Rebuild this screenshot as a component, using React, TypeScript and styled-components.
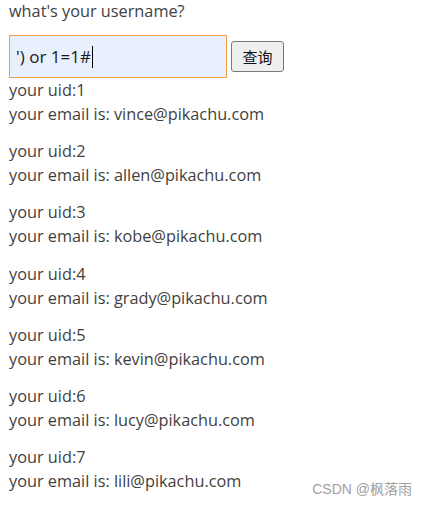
import React from "react";
import styled, { createGlobalStyle } from "styled-components";

const Global = createGlobalStyle`
  html, body { margin: 0; padding: 0; background: #ffffff; }
  body { font-family: "Open Sans", "Noto Sans CJK SC", sans-serif; }
`;

const Page = styled.div`
  position: relative;
  width: 428px;
  height: 507px;
  padding: 0 0 0 9px;
  box-sizing: border-box;
  color: #3f3f3f;
  font-size: 16.3px;
  line-height: 24px;
`;

const Title = styled.div`
  margin-top: -1px;
`;

const Form = styled.div`
  display: flex;
  align-items: center;
  gap: 4px;
  margin-top: 12px;
`;

const Input = styled.div`
  width: 218px;
  height: 43px;
  box-sizing: border-box;
  border: 1px solid #f0a04a;
  background: #e8f0fe;
  color: #1a1a1a;
  font-size: 17px;
  display: flex;
  align-items: center;
  padding-left: 6px;
`;

const Caret = styled.span`
  display: inline-block;
  width: 1px;
  height: 22px;
  background: #000;
  margin-left: 1px;
`;

const Button = styled.button`
  width: 53px;
  height: 31px;
  box-sizing: border-box;
  border: 1px solid #7a7a7a;
  border-radius: 3px;
  background: #efefef;
  color: #111;
  font-family: "Noto Sans CJK SC", sans-serif;
  font-size: 15px;
  padding: 0;
`;

const List = styled.div`
  display: flex;
  flex-direction: column;
  gap: 13.2px;
`;

const Record = styled.div`
  display: flex;
  flex-direction: column;
`;

const Watermark = styled.div`
  position: absolute;
  right: 16px;
  bottom: 9px;
  color: #a0a0a0;
  font-family: "Liberation Sans", "Noto Sans CJK SC", sans-serif;
  font-size: 14px;
  line-height: 16px;
`;

const users = [
  { uid: 1, email: "vince@pikachu.com" },
  { uid: 2, email: "allen@pikachu.com" },
  { uid: 3, email: "kobe@pikachu.com" },
  { uid: 4, email: "grady@pikachu.com" },
  { uid: 5, email: "kevin@pikachu.com" },
  { uid: 6, email: "lucy@pikachu.com" },
  { uid: 7, email: "lili@pikachu.com" },
];

export default function App() {
  return (
    <Page>
      <Global />
      <Title>what's your username?</Title>
      <Form>
        <Input>
          ') or 1=1#<Caret />
        </Input>
        <Button>查询</Button>
      </Form>
      <List>
        {users.map((u) => (
          <Record key={u.uid}>
            <div>your uid:{u.uid}</div>
            <div>your email is: {u.email}</div>
          </Record>
        ))}
      </List>
      <Watermark>CSDN @枫落雨</Watermark>
    </Page>
  );
}
